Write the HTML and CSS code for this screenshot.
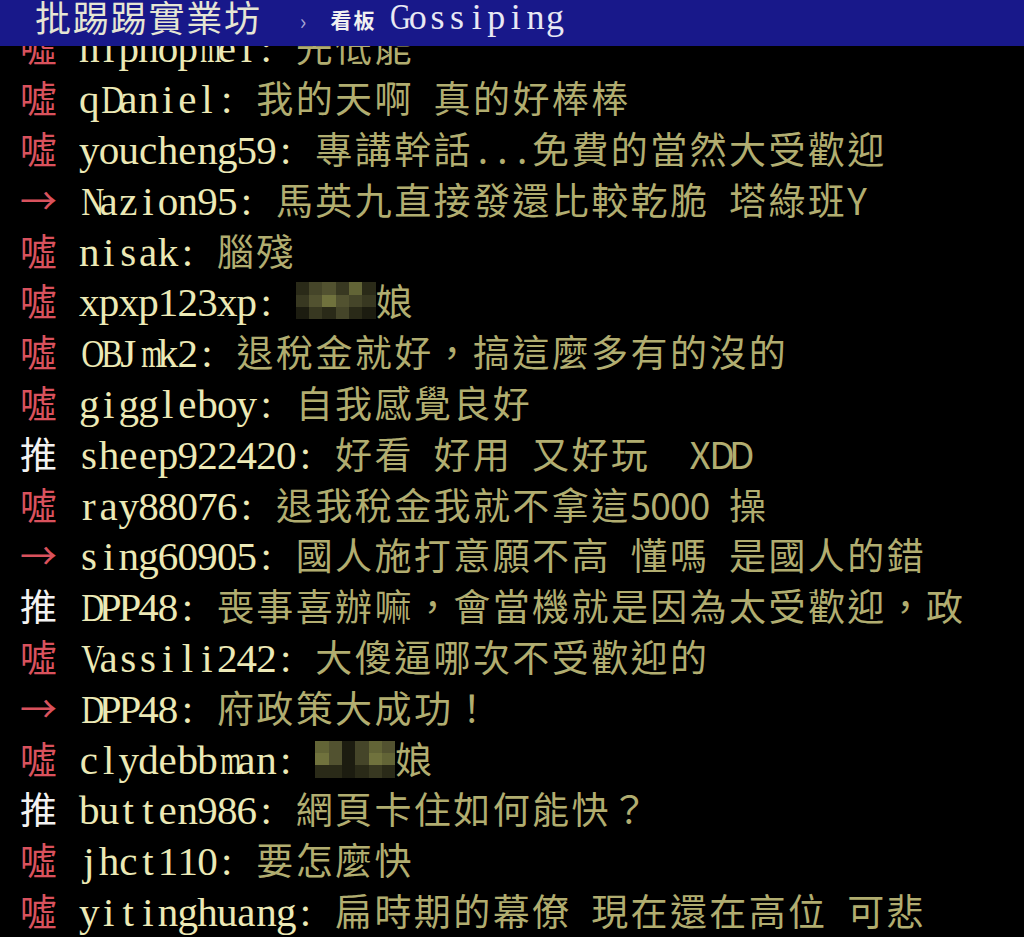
FILE: index.html
```html
<!DOCTYPE html>
<html lang="zh-Hant">
<head>
<meta charset="utf-8">
<title>批踢踢實業坊 › 看板 Gossiping</title>
<link rel="stylesheet" href="styles.css">
</head>
<body>
<header class="top">
<span class="site">批踢踢實業坊</span><span class="sep">›</span><span class="board-label">看板</span><span class="board"><i class="w">G</i><i>o</i><i>s</i><i>s</i><i>i</i><i>p</i><i>i</i><i>n</i><i>g</i></span>
</header>
<main class="feed">
<div class="clip"><div class="row"><span class="tag boo">噓</span><i class="sp"> </i><span class="id"><i>h</i><i>i</i><i>p</i><i>h</i><i>o</i><i>p</i><i class="m">m</i><i>e</i><i>i</i><i>:</i><i> </i></span><span class="msg">先低能</span></div></div>
<div class="row"><span class="tag boo">噓</span><i class="sp"> </i><span class="id"><i>q</i><i class="w">D</i><i>a</i><i>n</i><i>i</i><i>e</i><i>l</i><i>:</i><i> </i></span><span class="msg">我的天啊<i> </i>真的好棒棒</span></div>
<div class="row"><span class="tag boo">噓</span><i class="sp"> </i><span class="id"><i>y</i><i>o</i><i>u</i><i>c</i><i>h</i><i>e</i><i>n</i><i>g</i><i>5</i><i>9</i><i>:</i><i> </i></span><span class="msg">專講幹話<i>.</i><i>.</i><i>.</i>免費的當然大受歡迎</span></div>
<div class="row"><span class="tag arrow">→</span><i class="sp"> </i><span class="id"><i class="w">N</i><i>a</i><i>z</i><i>i</i><i>o</i><i>n</i><i>9</i><i>5</i><i>:</i><i> </i></span><span class="msg">馬英九直接發還比較乾脆<i> </i>塔綠班<i>Y</i></span></div>
<div class="row"><span class="tag boo">噓</span><i class="sp"> </i><span class="id"><i>n</i><i>i</i><i>s</i><i>a</i><i>k</i><i>:</i><i> </i></span><span class="msg">腦殘</span></div>
<div class="row"><span class="tag boo">噓</span><i class="sp"> </i><span class="id"><i>x</i><i>p</i><i>x</i><i>p</i><i>1</i><i>2</i><i>3</i><i>x</i><i>p</i><i>:</i><i> </i></span><span class="msg"><span class="mosaic"><b class="s1"></b><b class="s3"></b><b class="s4"></b><b class="s2"></b><b class="s5"></b><b class="s1"></b><b class="s2"></b><b class="s4"></b><b class="s6"></b><b class="s4"></b><b class="s3"></b><b class="s2"></b><b class="s0"></b><b class="s2"></b><b class="s1"></b><b class="s3"></b><b class="s1"></b><b class="s0"></b></span>娘</span></div>
<div class="row"><span class="tag boo">噓</span><i class="sp"> </i><span class="id"><i class="w">O</i><i class="w">B</i><i>J</i><i class="m">m</i><i>k</i><i>2</i><i>:</i><i> </i></span><span class="msg">退稅金就好，搞這麼多有的沒的</span></div>
<div class="row"><span class="tag boo">噓</span><i class="sp"> </i><span class="id"><i>g</i><i>i</i><i>g</i><i>g</i><i>l</i><i>e</i><i>b</i><i>o</i><i>y</i><i>:</i><i> </i></span><span class="msg">自我感覺良好</span></div>
<div class="row"><span class="tag push">推</span><i class="sp"> </i><span class="id"><i>s</i><i>h</i><i>e</i><i>e</i><i>p</i><i>9</i><i>2</i><i>2</i><i>4</i><i>2</i><i>0</i><i>:</i><i> </i></span><span class="msg">好看<i> </i>好用<i> </i>又好玩<i> </i><i> </i><i>X</i><i>D</i><i>D</i></span></div>
<div class="row"><span class="tag boo">噓</span><i class="sp"> </i><span class="id"><i>r</i><i>a</i><i>y</i><i>8</i><i>8</i><i>0</i><i>7</i><i>6</i><i>:</i><i> </i></span><span class="msg">退我稅金我就不拿這<i>5</i><i>0</i><i>0</i><i>0</i><i> </i>操</span></div>
<div class="row"><span class="tag arrow">→</span><i class="sp"> </i><span class="id"><i>s</i><i>i</i><i>n</i><i>g</i><i>6</i><i>0</i><i>9</i><i>0</i><i>5</i><i>:</i><i> </i></span><span class="msg">國人施打意願不高<i> </i>懂嗎<i> </i>是國人的錯</span></div>
<div class="row"><span class="tag push">推</span><i class="sp"> </i><span class="id"><i class="w">D</i><i>P</i><i>P</i><i>4</i><i>8</i><i>:</i><i> </i></span><span class="msg">喪事喜辦嘛，會當機就是因為太受歡迎，政</span></div>
<div class="row"><span class="tag boo">噓</span><i class="sp"> </i><span class="id"><i class="w">V</i><i>a</i><i>s</i><i>s</i><i>i</i><i>l</i><i>i</i><i>2</i><i>4</i><i>2</i><i>:</i><i> </i></span><span class="msg">大傻逼哪次不受歡迎的</span></div>
<div class="row"><span class="tag arrow">→</span><i class="sp"> </i><span class="id"><i class="w">D</i><i>P</i><i>P</i><i>4</i><i>8</i><i>:</i><i> </i></span><span class="msg">府政策大成功！</span></div>
<div class="row"><span class="tag boo">噓</span><i class="sp"> </i><span class="id"><i>c</i><i>l</i><i>y</i><i>d</i><i>e</i><i>b</i><i>b</i><i class="m">m</i><i>a</i><i>n</i><i>:</i><i> </i></span><span class="msg"><span class="mosaic alt"><b class="s5"></b><b class="s4"></b><b class="s0"></b><b class="s3"></b><b class="s5"></b><b class="s4"></b><b class="s6"></b><b class="s4"></b><b class="s0"></b><b class="s3"></b><b class="s6"></b><b class="s5"></b><b class="s1"></b><b class="s1"></b><b class="s0"></b><b class="s1"></b><b class="s2"></b><b class="s1"></b></span>娘</span></div>
<div class="row"><span class="tag push">推</span><i class="sp"> </i><span class="id"><i>b</i><i>u</i><i>t</i><i>t</i><i>e</i><i>n</i><i>9</i><i>8</i><i>6</i><i>:</i><i> </i></span><span class="msg">網頁卡住如何能快？</span></div>
<div class="row"><span class="tag boo">噓</span><i class="sp"> </i><span class="id"><i>j</i><i>h</i><i>c</i><i>t</i><i>1</i><i>1</i><i>0</i><i>:</i><i> </i></span><span class="msg">要怎麼快</span></div>
<div class="row"><span class="tag boo">噓</span><i class="sp"> </i><span class="id"><i>y</i><i>i</i><i>t</i><i>i</i><i>n</i><i>g</i><i>h</i><i>u</i><i>a</i><i>n</i><i>g</i><i>:</i><i> </i></span><span class="msg">扁時期的幕僚<i> </i>現在還在高位<i> </i>可悲</span></div>
</main>
</body>
</html>
```
FILE: styles.css
```css
html, body {
  margin: 0;
  padding: 0;
  background: #000;
  height: 937px;
  overflow: hidden;
}

body {
  font-family: "Noto Sans CJK TC", "Noto Sans", sans-serif;
}

/* ---------- board header ---------- */
.top {
  height: 46px;
  background: #18188a;
  display: flex;
  align-items: flex-start;
  padding-left: 35px;
  box-sizing: border-box;
}

.site {
  font-size: 36px;
  line-height: 32px;
  letter-spacing: 1.8px;
  color: #e6e6d4;
}

.sep {
  font-size: 22px;
  line-height: 22px;
  color: #a4a4d4;
  margin: 9px 0 0 38px;
}

.board-label {
  font-size: 21px;
  line-height: 21px;
  font-weight: 700;
  letter-spacing: 2px;
  color: #f0f0f0;
  margin: 9px 0 0 24px;
}

.board {
  font-family: "Liberation Serif", "Times New Roman", serif;
  font-size: 36px;
  line-height: 36px;
  color: #e8e8f4;
  margin: -1px 0 0 12px;
}

.board i {
  display: inline-block;
  width: 19.6px;
  text-align: center;
  font-style: normal;
}

.board i.w { transform: scaleX(0.8); }

/* ---------- comment rows ---------- */
.feed {
  display: block;
  padding-left: 20px;
}

/* the top row is scrolled half under the header */
.clip {
  height: 26.2px;
  overflow: hidden;
  display: flex;
  align-items: flex-end;
}

.row {
  height: 50.8px;
  font-size: 37px;
  line-height: 50.8px;
  letter-spacing: 2.4px;
  white-space: nowrap;
  flex: none;
}

.row i {
  display: inline-block;
  width: 19.7px;
  text-align: center;
  font-style: normal;
  letter-spacing: 0;
  line-height: 1;
  white-space: pre;
}

.tag.boo,
.tag.arrow { color: #d9525d; }
.tag.push { color: #f2f2f2; }

.id {
  font-family: "Liberation Serif", "Times New Roman", serif;
  font-size: 41px;
  line-height: 1;
  color: #ece9b6;
}

.id i.w { transform: scaleX(0.78); }
.id i.m { transform: scaleX(0.66); }

.msg {
  color: #b1ad70;
}

/* pixelated censor block */
.mosaic {
  display: inline-grid;
  grid-template-columns: repeat(6, 1fr);
  grid-template-rows: repeat(3, 1fr);
  width: 80px;
  height: 37px;
  vertical-align: top;
  margin-top: 7px;
}

.mosaic.alt { margin-top: 8px; }

.mosaic b { display: block; }
.mosaic .s0 { background: #1c1c10; }
.mosaic .s1 { background: #2a2a18; }
.mosaic .s2 { background: #383821; }
.mosaic .s3 { background: #454529; }
.mosaic .s4 { background: #525230; }
.mosaic .s5 { background: #626436; }
.mosaic .s6 { background: #70723d; }
```
